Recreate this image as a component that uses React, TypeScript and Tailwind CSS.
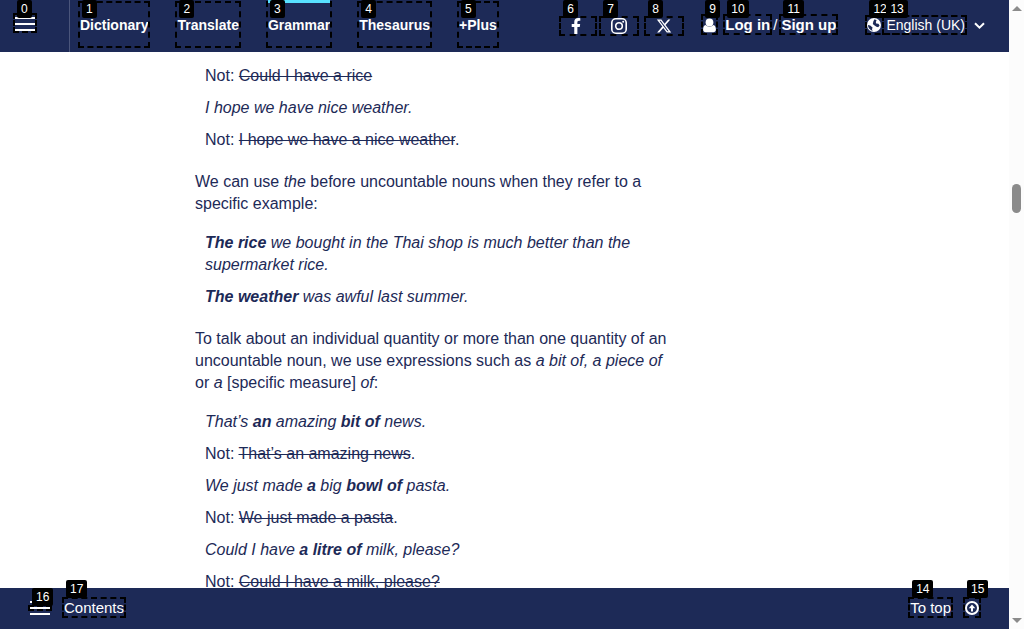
import type { ReactNode } from "react";
import { FaFacebookF } from "react-icons/fa";
import { FaXTwitter } from "react-icons/fa6";

const marked = "relative outline-2 outline-dashed outline-black";

function Tag({ n, place = "left-0.5 -top-[15px]" }: { n: number; place?: string }) {
  return (
    <span
      aria-hidden="true"
      className={`absolute ${place} z-20 rounded-xs bg-black px-1 text-xs leading-[18px] font-normal text-white`}
    >
      {n}
    </span>
  );
}

const navItems = ["Dictionary", "Translate", "Grammar", "Thesaurus", "+Plus"];

function UserIcon() {
  return (
    <svg viewBox="0 0 13 15" className="h-[15px] w-[13px]" fill="currentColor" aria-hidden="true">
      <circle cx="6.5" cy="4.5" r="3.9" />
      <path d="M2.700 7C.8 7.300.1 9.300.1 11.500.1 13.200 1.200 14.300 2.800 14.300h7.400c1.600 0 2.700-1.100 2.700-2.800 0-2.200-.7-4.200-2.600-4.500C9.300 8 8 8.700 6.500 8.700S3.700 8 2.700 7Z" />
    </svg>
  );
}

function InstagramIcon() {
  return (
    <svg viewBox="0 0 16 16" className="h-4 w-4 shrink-0" fill="none" stroke="currentColor" strokeWidth="1.6" aria-hidden="true">
      <rect x="0.8" y="0.8" width="14.4" height="14.4" rx="4" />
      <circle cx="8" cy="8" r="3.3" />
      <circle cx="12.200" cy="3.800" r="1" fill="currentColor" stroke="none" />
    </svg>
  );
}

function GlobeIcon() {
  return (
    <svg viewBox="0 0 14 14" className="h-3.5 w-3.5" aria-hidden="true">
      <circle cx="7" cy="7" r="7" fill="currentColor" />
      <path d="M7.500 1.300 9.600 2.200 8.800 4 9.200 5.400 11.400 5.800 12.600 7.600 11.200 9.200 9.400 8.800 7.600 7.400 5.800 6 6.400 3.200Z" fill="#1d2a57" />
      <path d="M.9 7 3.200 7.400 5.600 9.600 5 11.200 5.600 12.900C3 12.200 1 10 .9 7Z" fill="#1d2a57" />
    </svg>
  );
}

function UpIcon() {
  return (
    <svg viewBox="0 0 14 14" className="h-3.5 w-3.5" fill="none" stroke="currentColor" strokeWidth="2" aria-hidden="true">
      <circle cx="7" cy="7" r="6" />
      <path d="M7 10.500V6" />
      <path d="M7 3.500 10.300 7.200H3.700Z" fill="currentColor" stroke="none" />
    </svg>
  );
}

function Header() {
  return (
    <header className="flex h-[52px] shrink-0 bg-[#1d2a57] text-white">
      <div className="flex w-[70px] shrink-0 items-start border-r border-[#4a557b] pt-[15px] pl-[15px]">
        <button type="button" aria-label="Open menu" className={`flex h-4 w-5 flex-col justify-end gap-1 ${marked}`}>
          <Tag n={0} />
          <span className="h-0.5 w-5 bg-white" />
          <span className="h-0.5 w-5 bg-white" />
          <span className="h-0.5 w-5 bg-white" />
        </button>
      </div>
      <nav aria-label="Main" className="ml-2.5 flex gap-[29px] pt-[3px] text-sm font-bold">
        {navItems.map((name, i) => (
          <a key={name} href="#" className={`flex h-[43px] items-center ${marked}`}>
            {name === "Grammar" && <span className="absolute inset-x-0 -top-[3px] z-10 h-[3px] bg-[#58e1ff]" />}
            <Tag n={i + 1} place="left-0.5 -top-[3px]" />
            {name}
          </a>
        ))}
      </nav>
      <div className="ml-auto flex items-start pt-4 pr-6 text-[15px] leading-[17px]">
        <a href="#" aria-label="Facebook" className={`mt-0.5 flex h-4 w-[34px] items-center justify-center pr-[5px] ${marked}`}>
          <Tag n={6} place="left-0.5 -top-[18px]" />
          <FaFacebookF className="h-4 w-4" />
        </a>
        <a href="#" aria-label="Instagram" className={`mt-0.5 ml-1.5 flex h-4 w-9 items-center justify-center ${marked}`}>
          <Tag n={7} place="left-0.5 -top-[18px]" />
          <InstagramIcon />
        </a>
        <a href="#" aria-label="X" className={`mt-0.5 ml-[9px] flex h-4 w-9 items-center justify-center ${marked}`}>
          <Tag n={8} place="left-0.5 -top-[18px]" />
          <FaXTwitter className="h-4 w-4" />
        </a>
        <a href="#" aria-label="Account" className={`ml-[21px] flex h-[17px] items-end ${marked}`}>
          <Tag n={9} place="left-0.5 -top-4" />
          <UserIcon />
        </a>
        <a href="#" className={`ml-[9px] font-bold ${marked}`}>
          <Tag n={10} place="left-0.5 -top-4" />
          Log in
        </a>
        <span className="pr-1 pl-[3px]">/</span>
        <a href="#" className={`font-bold ${marked}`}>
          <Tag n={11} place="left-0.5 -top-4" />
          Sign up
        </a>
        <button type="button" className={`mt-px ml-[31px] flex h-4 items-center text-sm leading-4 ${marked}`}>
          <Tag n={12} place="left-0.5 -top-[17px]" />
          <GlobeIcon />
          <span className={`ml-[3px] pl-0.5 ${marked}`}>
            <Tag n={13} place="left-0.5 -top-[17px]" />
            English (UK)
          </span>
        </button>
        <svg viewBox="0 0 11 8" className="mt-1.5 ml-[9px] h-2 w-[11px]" fill="none" stroke="currentColor" strokeWidth="2" aria-hidden="true">
          <path d="M1 1.200 5.500 5.700 10 1.200" />
        </svg>
      </div>
    </header>
  );
}

function Examples({ children }: { children: ReactNode }) {
  return <ul className="flex flex-col gap-2.5 pl-2.5">{children}</ul>;
}

function Article() {
  return (
    <main className="min-h-0 flex-1 overflow-hidden bg-white pt-[13px] pl-[195px] text-base leading-[22px] text-[#1d2a57]">
      <article className="max-w-[480px]">
        <Examples>
          <li>Not: <s>Could I have a rice</s></li>
          <li><i>I hope we have nice weather.</i></li>
          <li>Not: <s>I hope we have a nice weather</s>.</li>
        </Examples>
        <p className="mt-5 mb-[17px]">
          We can use <i>the</i> before uncountable nouns when they refer to a specific example:
        </p>
        <Examples>
          <li><i><b>The rice</b> we bought in the Thai shop is much better than the supermarket rice.</i></li>
          <li><i><b>The weather</b> was awful last summer.</i></li>
        </Examples>
        <p className="mt-5 mb-[17px]">
          To talk about an individual quantity or more than one quantity of an uncountable noun, we use
          expressions such as <i>a bit of, a piece of</i> or <i>a</i> [specific measure] <i>of</i>:
        </p>
        <Examples>
          <li><i>That’s <b>an</b> amazing <b>bit of</b> news.</i></li>
          <li>Not: <s>That’s an amazing news</s>.</li>
          <li><i>We just made <b>a</b> big <b>bowl of</b> pasta.</i></li>
          <li>Not: <s>We just made a pasta</s>.</li>
          <li><i>Could I have <b>a litre of</b> milk, please?</i></li>
          <li>Not: <s>Could I have a milk, please?</s></li>
        </Examples>
      </article>
    </main>
  );
}

function Footer() {
  return (
    <footer className="flex h-[41px] shrink-0 items-start bg-[#1d2a57] pt-[11px] pr-[30px] pl-[30px] text-[15px] leading-[17px] text-white">
      <button type="button" aria-label="Show contents" className="mt-0.5 flex flex-col gap-1">
        <span className="h-0.5 w-5 bg-white" />
        <span className={`h-0.5 w-5 bg-white ${marked}`}>
          <Tag n={16} place="left-0.5 -top-[19px]" />
        </span>
        <span className="h-0.5 w-5 bg-white" />
      </button>
      <a href="#" className={`ml-3.5 ${marked}`}>
        <Tag n={17} place="left-0.5 -top-[19px]" />
        Contents
      </a>
      <a href="#" className={`ml-auto ${marked}`}>
        <Tag n={14} place="left-0.5 -top-[19px]" />
        To top
      </a>
      <a href="#" aria-label="Back to top" className={`ml-3.5 flex h-[17px] items-center ${marked}`}>
        <Tag n={15} place="left-0.5 -top-[19px]" />
        <UpIcon />
      </a>
    </footer>
  );
}

function ScrollTrack() {
  return (
    <div aria-hidden="true" className="flex w-[15px] shrink-0 flex-col items-center bg-[#fcfcfc] py-1.5">
      <span className="border-x-5 border-b-5 border-x-transparent border-b-[#8b8b8b]" />
      <span className="mt-[173px] h-[29px] w-[9px] rounded-full bg-[#8b8b8b]" />
      <span className="mt-auto border-x-5 border-t-5 border-x-transparent border-t-[#8b8b8b]" />
    </div>
  );
}

export default function App() {
  return (
    <div className="flex h-screen font-['Liberation_Sans',Arial,sans-serif]">
      <div className="flex min-w-0 flex-1 flex-col">
        <Header />
        <Article />
        <Footer />
      </div>
      <ScrollTrack />
    </div>
  );
}
